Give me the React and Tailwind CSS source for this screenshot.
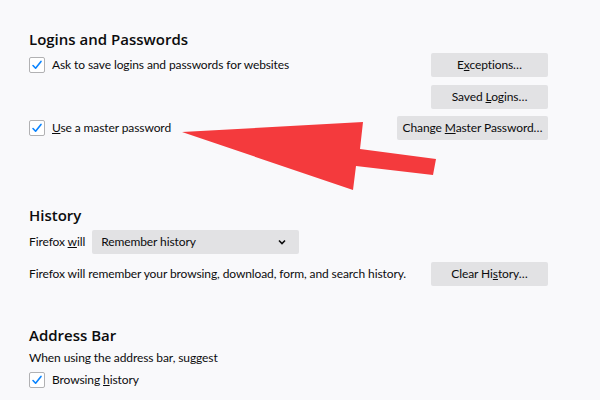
import React from "react";

const font = { fontFamily: 'Lato, "Open Sans", sans-serif' };
const headFont = { fontFamily: '"Open Sans", "Noto Sans", sans-serif' };

function Check({ children }) {
  return (
    <div className="flex items-center gap-[7px] whitespace-nowrap">
      <div className="w-[16px] h-[16px] bg-white border border-[#b1b1b3] rounded-[2px] flex items-center justify-center">
        <svg width="12" height="12" viewBox="0 0 12 12">
          <path d="M2 6.5 L4.6 9.2 L10 2.4" fill="none" stroke="#0a84ff" strokeWidth="1.6" strokeLinecap="round" strokeLinejoin="round" />
        </svg>
      </div>
      <span>{children}</span>
    </div>
  );
}

function Btn({ children, w }) {
  return (
    <div className={`${w} h-[24px] shrink-0 whitespace-nowrap bg-[#e2e2e4] rounded-[2px] flex items-center justify-center text-[#0c0c0d]`}>
      {children}
    </div>
  );
}

function Head({ children, className }) {
  return (
    <div className={`text-[15px] font-semibold leading-[20px] tracking-normal ${className}`} style={headFont}>
      {children}
    </div>
  );
}

export default function App() {
  return (
    <div className="relative w-[600px] h-[400px] overflow-hidden bg-[#f9f9fb] text-[12px] tracking-[-0.1px] text-[#0c0c0d]" style={font}>
      <div className="pl-[29px] pr-[52px] pt-[29px] flex flex-col">
        <Head>Logins and Passwords</Head>
        <div className="mt-[4px] flex items-center justify-between h-[24px]">
          <Check>Ask to save logins and passwords for websites</Check>
          <Btn w="w-[117px]"><span>E<u>x</u>ceptions…</span></Btn>
        </div>
        <div className="mt-[8px] flex justify-end">
          <Btn w="w-[117px]"><span>Saved <u>L</u>ogins…</span></Btn>
        </div>
        <div className="mt-[7px] flex items-center justify-between h-[24px]">
          <Check><u>U</u>se a master password</Check>
          <Btn w="w-[151px]"><span>Change <u>M</u>aster Password…</span></Btn>
        </div>

        <Head className="mt-[65px]">History</Head>
        <div className="mt-[5px] flex items-center h-[24px] gap-[7px]">
          <span className="whitespace-nowrap">Firefox <u>w</u>ill</span>
          <div className="w-[207px] h-[24px] bg-[#e2e2e4] rounded-[2px] flex items-center justify-between pl-[9px] pr-[13px]">
            <span>Remember history</span>
            <svg width="8" height="6" viewBox="0 0 8 6">
              <path d="M1 1.5 L4 4.5 L7 1.5" fill="none" stroke="#0c0c0d" strokeWidth="1.6" />
            </svg>
          </div>
        </div>
        <div className="mt-[7px] flex items-center justify-between h-[25px]">
          <span className="whitespace-nowrap">Firefox will remember your browsing, download, form, and search history.</span>
          <Btn w="w-[117px]"><span>Clear Hi<u>s</u>tory…</span></Btn>
        </div>

        <Head className="mt-[39px]">Address Bar</Head>
        <div className="mt-[4px] leading-[18px]">When using the address bar, suggest</div>
        <div className="mt-[5px] h-[16px] flex items-center">
          <Check>Browsing <u>h</u>istory</Check>
        </div>
      </div>

      <svg className="absolute left-0 top-0 pointer-events-none" width="600" height="400" viewBox="0 0 600 400">
        <polygon points="182,132 363,122 360,149 436,159 433,175 356,166 353,190" fill="#f43a3d" />
      </svg>
    </div>
  );
}
